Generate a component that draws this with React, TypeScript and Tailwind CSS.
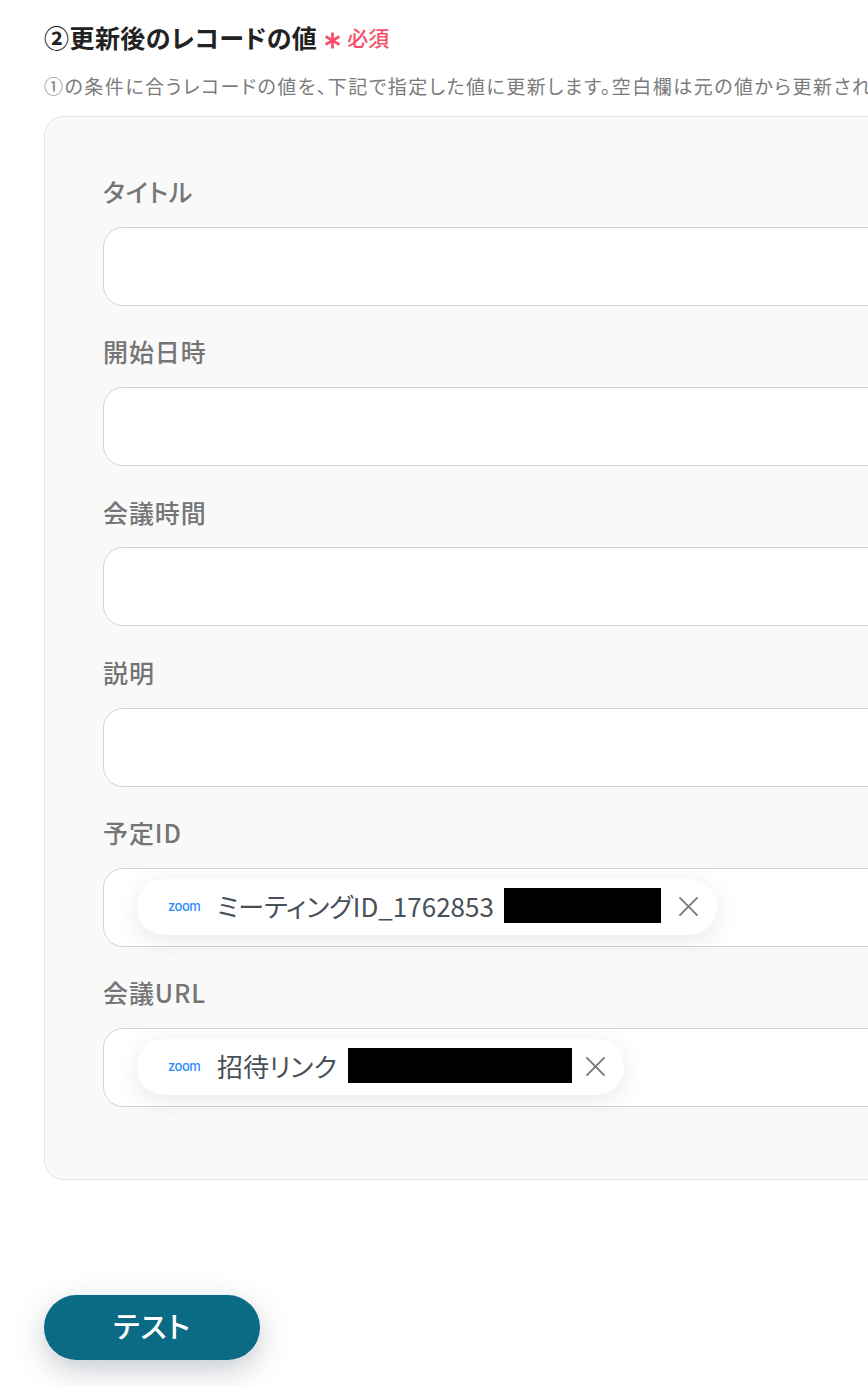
const fields = [
  { label: "タイトル" },
  { label: "開始日時" },
  { label: "会議時間" },
  { label: "説明" },
  { label: "予定ID", chip: "ミーティングID_1762853", mask: "ml-[10px] w-[157px]", close: "ml-[17px]" },
  { label: "会議URL", chip: "招待リンク", mask: "ml-[11px] w-[224px]", close: "ml-[13px]" },
];

const ZoomChip = ({ text, mask, close }: { text: string; mask: string; close: string }) => {
  return (
    <div className="inline-flex h-[56px] items-center rounded-full bg-white pl-[31px] pr-[18px] shadow-[0_6px_24px_rgba(30,40,60,0.1)]">
      <span className="mb-[2px] w-[32px] font-['Inter',sans-serif] text-[13px] font-medium leading-none tracking-[-0.5px] text-[#2d8cff]">
        zoom
      </span>
      <span className="mb-[4px] ml-[17px] text-[26px] text-[#495057]">{text}</span>
      <div className={`mb-[3px] h-[35px] bg-black ${mask}`} />
      <svg className={`mb-[1px] size-[21px] ${close}`} viewBox="0 0 22 22" fill="none" stroke="#7a7a7a" strokeWidth="2">
        <path d="M1.5 1.5 20.5 20.5M20.5 1.5 1.5 20.5" />
      </svg>
    </div>
  );
};

export default function App() {
  return (
    <div className="h-[1386px] w-[868px] overflow-hidden bg-white pl-[44px] pt-[18px] font-['Noto_Sans_CJK_JP',sans-serif] [font-feature-settings:'palt']">
      <div className="flex h-[40px] items-center whitespace-nowrap">
        <h2 className="text-[25px] font-bold tracking-[0.45px] text-[#222222]">②更新後のレコードの値</h2>
        <svg className="ml-[7px] mt-[4px] size-[17px]" viewBox="0 0 16 16" fill="none" stroke="#f7506a" strokeWidth="2.6">
          <path d="M8 0.5V15.5M1.5 4.2 14.5 11.8M14.5 4.2 1.5 11.8" />
        </svg>
        <span className="ml-[6px] text-[21px] font-medium text-[#f7506a]">必須</span>
      </div>
      <p className="mt-[13px] h-[29px] whitespace-nowrap text-[19px] leading-[29px] tracking-[1.5px] text-[#7b7b7b]">
        ①の条件に合うレコードの値を、下記で指定した値に更新します。空白欄は元の値から更新され
      </p>
      <div className="mt-[16px] h-[1064px] w-[1000px] rounded-[20px] border border-[#e2e3e6] bg-[#f9f9fa] pl-[58px] pt-[57px]">
        <div className="flex flex-col gap-[28.2px]">
          {fields.map((field) => (
            <div key={field.label}>
              <div className="flex h-[40px] -translate-y-[2px] items-center text-[25px] font-medium tracking-[0.9px] text-[#757575]">
                {field.label}
              </div>
              <div className="mt-[13px] flex h-[79px] items-center rounded-[20px] border border-[#d0d5dc] bg-white pl-[33px]">
                {field.chip && <ZoomChip text={field.chip} mask={field.mask} close={field.close} />}
              </div>
            </div>
          ))}
        </div>
      </div>
      <button className="mt-[115px] flex h-[65px] w-[216px] items-center justify-center rounded-full bg-[#0b6a84] pb-[4px] text-[29px] font-medium tracking-[1px] text-white shadow-[0_10px_30px_rgba(30,50,70,0.25)]">
        テスト
      </button>
    </div>
  );
}
